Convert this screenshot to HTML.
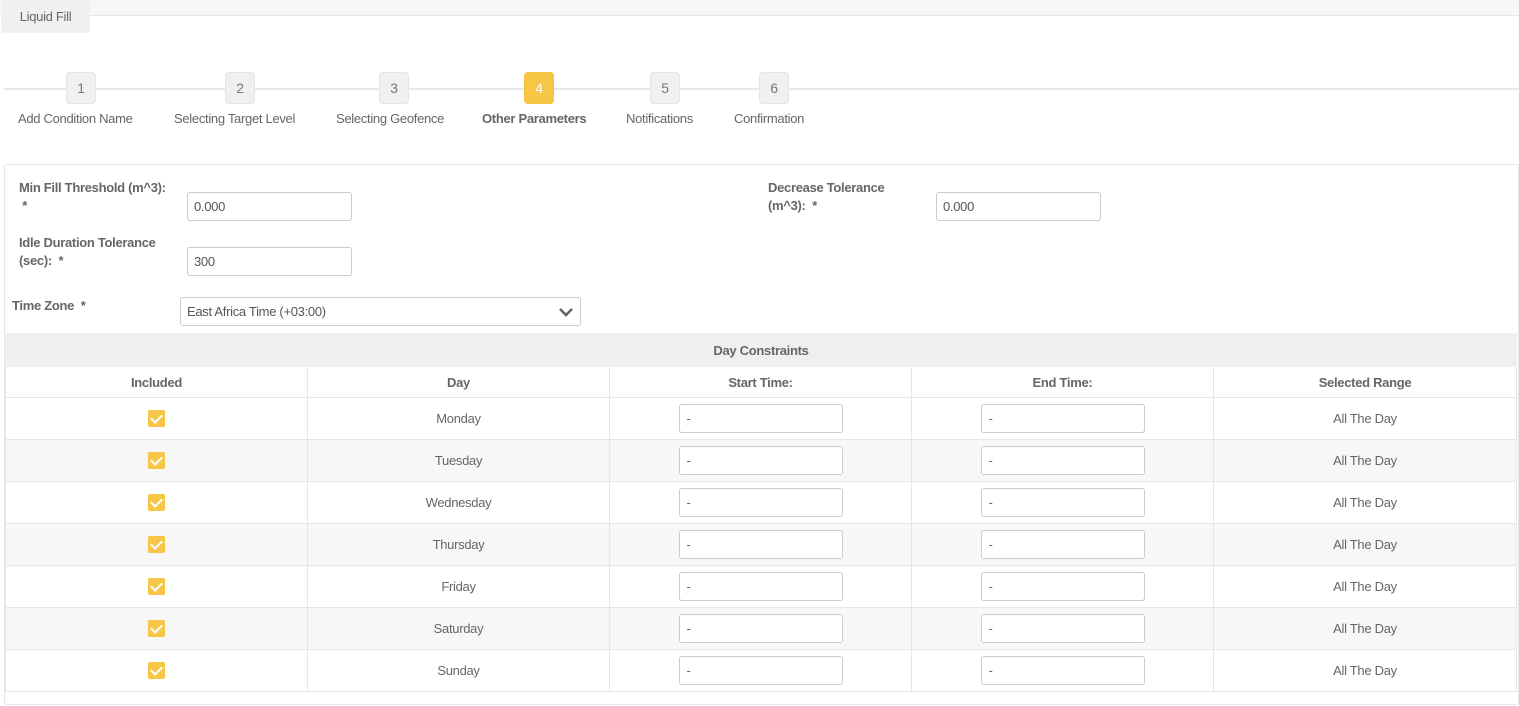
<!DOCTYPE html>
<html><head><meta charset="utf-8"><style>
*{box-sizing:border-box;margin:0;padding:0}
body{width:1519px;height:706px;background:#fff;font-family:"Liberation Sans",sans-serif;font-size:13px;color:#666;position:relative;overflow:hidden;letter-spacing:-0.3px}
.a{position:absolute}
.topbar{left:0;top:0;width:1519px;height:16px;background:#f7f7f7;border-bottom:1px solid #e6e6e6}
.tab{left:1px;top:0;width:89px;height:33px;background:#f0f0f0;border-radius:0 0 3px 3px;color:#666;text-align:center;line-height:33px}
.line{left:4px;top:88px;width:1515px;height:2px;background:#e8e8e8}
.step{width:30px;height:32px;top:72px;background:#f0f0f0;border:1px solid #e4e4e4;border-radius:4px;text-align:center;line-height:30px;color:#777;font-size:14px}
.step.on{background:#f8c646;border-color:#f5c03a;color:#fff}
.sl{top:111px;white-space:nowrap;color:#666}
.panel{left:4px;top:164px;width:1515px;height:541px;border:1px solid #e6e6e6;border-radius:3px}
.lbl{font-weight:bold;color:#666;line-height:18px}
.inp{height:29px;border:1px solid #ccc;border-radius:3px;background:#fff;padding-left:6px;line-height:27px;color:#555}
table{position:absolute;left:5px;top:333px;width:1512px;border-collapse:collapse}
td,th{border:1px solid #e6e6e6;text-align:center;color:#666}
th{font-weight:bold;height:31px}
tr.dc th{background:#efefef;height:33px;border-color:#efefef}
td{height:42px}
tr.odd td{background:#f7f7f7}
.cb{display:inline-block;width:17px;height:17px;background:#f8c646;border-radius:2px;vertical-align:middle;position:relative}
.cb:after{content:"";position:absolute;left:5px;top:2px;width:5px;height:9px;border:solid #fff;border-width:0 2px 2px 0;transform:rotate(45deg)}
.ti{display:inline-block;width:164px;height:29px;border:1px solid #ccc;border-radius:3px;text-align:left;padding-left:7px;line-height:27px;background:#fff;vertical-align:middle}
</style></head><body>
<div class="a topbar"></div>
<div class="a tab">Liquid Fill</div>
<div class="a line"></div>
<div class="a step" style="left:66px">1</div>
<div class="a step" style="left:225px">2</div>
<div class="a step" style="left:379px">3</div>
<div class="a step on" style="left:524px">4</div>
<div class="a step" style="left:650px">5</div>
<div class="a step" style="left:759px">6</div>
<div class="a sl" style="left:18px">Add Condition Name</div>
<div class="a sl" style="left:174px">Selecting Target Level</div>
<div class="a sl" style="left:336px">Selecting Geofence</div>
<div class="a sl" style="left:482px;font-weight:bold">Other Parameters</div>
<div class="a sl" style="left:626px">Notifications</div>
<div class="a sl" style="left:734px">Confirmation</div>
<div class="a panel"></div>
<div class="a lbl" style="left:19px;top:179px">Min Fill Threshold (m^3):<br>&nbsp;*</div>
<div class="a inp" style="left:187px;top:192px;width:165px">0.000</div>
<div class="a lbl" style="left:19px;top:234px">Idle Duration Tolerance<br>(sec):&nbsp; *</div>
<div class="a inp" style="left:187px;top:247px;width:165px">300</div>
<div class="a lbl" style="left:768px;top:179px">Decrease Tolerance<br>(m^3):&nbsp; *</div>
<div class="a inp" style="left:936px;top:192px;width:165px">0.000</div>
<div class="a lbl" style="left:12px;top:297px">Time Zone&nbsp; *</div>
<div class="a inp" style="left:180px;top:297px;width:401px">East Africa Time (+03:00)
<svg style="position:absolute;right:6px;top:9px" width="16" height="11" viewBox="0 0 16 11"><path d="M2 2 L8 8 L14 2" fill="none" stroke="#666" stroke-width="2.6"/></svg></div>
<table>
<tr class="dc"><th colspan="5">Day Constraints</th></tr>
<tr><th style="width:302px">Included</th><th style="width:302px">Day</th><th style="width:302px">Start Time:</th><th style="width:302px">End Time:</th><th>Selected Range</th></tr>
<tr><td><span class="cb"></span></td><td>Monday</td><td><span class="ti">-</span></td><td><span class="ti">-</span></td><td>All The Day</td></tr>
<tr class="odd"><td><span class="cb"></span></td><td>Tuesday</td><td><span class="ti">-</span></td><td><span class="ti">-</span></td><td>All The Day</td></tr>
<tr><td><span class="cb"></span></td><td>Wednesday</td><td><span class="ti">-</span></td><td><span class="ti">-</span></td><td>All The Day</td></tr>
<tr class="odd"><td><span class="cb"></span></td><td>Thursday</td><td><span class="ti">-</span></td><td><span class="ti">-</span></td><td>All The Day</td></tr>
<tr><td><span class="cb"></span></td><td>Friday</td><td><span class="ti">-</span></td><td><span class="ti">-</span></td><td>All The Day</td></tr>
<tr class="odd"><td><span class="cb"></span></td><td>Saturday</td><td><span class="ti">-</span></td><td><span class="ti">-</span></td><td>All The Day</td></tr>
<tr><td><span class="cb"></span></td><td>Sunday</td><td><span class="ti">-</span></td><td><span class="ti">-</span></td><td>All The Day</td></tr>
</table>
</body></html>
